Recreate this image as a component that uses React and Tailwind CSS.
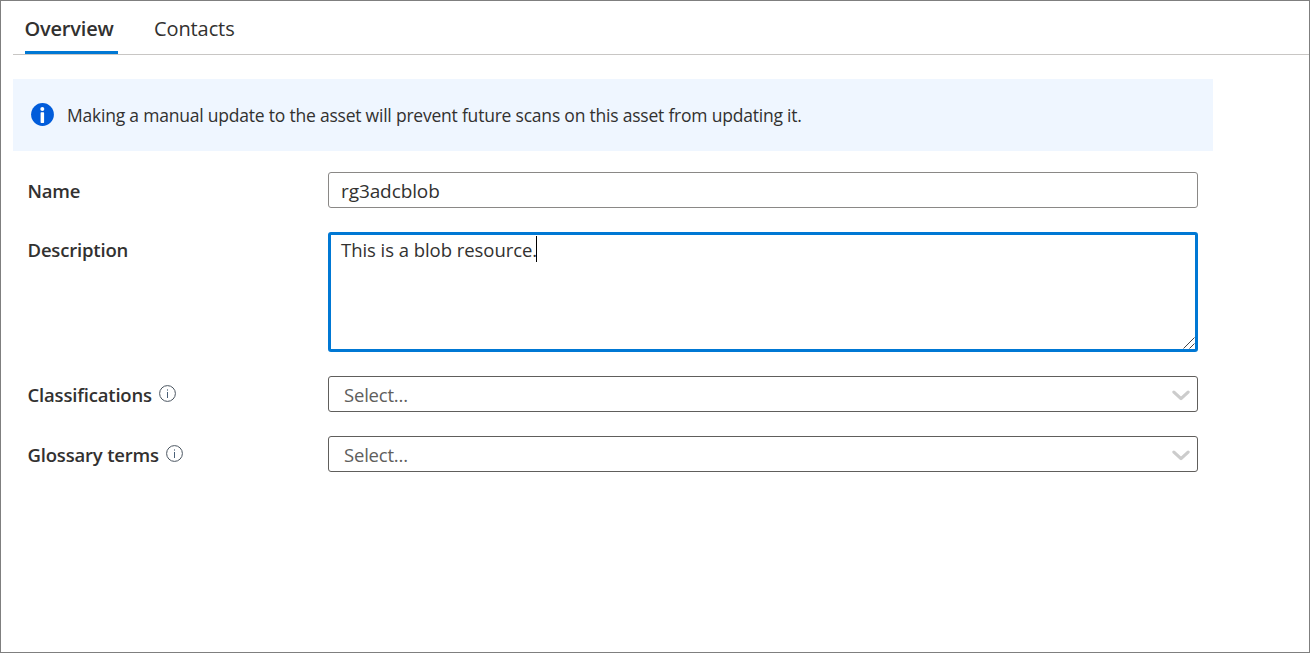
function InfoOutline() {
  return (
    <svg width="17" height="17" viewBox="0 0 17 17" fill="none" className="shrink-0">
      <circle cx="8.5" cy="8.5" r="7.9" stroke="#4a5560" strokeWidth="1" />
      <rect x="8" y="7" width="1" height="6" fill="#4a6078" />
      <rect x="8" y="4.4" width="1" height="1.2" fill="#4a6078" />
    </svg>
  );
}

function InfoSolid() {
  return (
    <svg width="23" height="23" viewBox="0 0 23 23" className="shrink-0">
      <circle cx="11.5" cy="11.5" r="11.4" fill="#015cda" />
      <circle cx="11.3" cy="5.9" r="2" fill="#fff" />
      <rect x="9.6" y="9.3" width="3.5" height="10.6" rx="0.6" fill="#fff" />
    </svg>
  );
}

function Chevron() {
  return (
    <svg width="18" height="11" viewBox="0 0 18 11" fill="none" className="shrink-0">
      <path d="M1.9 2.1 L9 8.6 L16.1 2.1" stroke="#cccccc" strokeWidth="3.2" strokeLinecap="round" strokeLinejoin="round" />
    </svg>
  );
}

function Label({ children, info }) {
  return (
    <div className="flex h-9 w-[300px] shrink-0 items-center gap-[7px] pt-[2px] text-[18.5px] font-semibold">
      <span className="-ml-[0.5px] tracking-[-0.18px]">{children}</span>
      {info && (
        <span className="-mt-1">
          <InfoOutline />
        </span>
      )}
    </div>
  );
}

function Select() {
  return (
    <div className="flex h-9 flex-1 items-center justify-between rounded-[3px] border border-[#605e5c] pt-[2px] pr-[7px] pl-[15px] text-[#605e5c]">
      <span className="tracking-[-0.2px]">Select...</span>
      <Chevron />
    </div>
  );
}

export default function App() {
  return (
    <div className="h-[653px] w-full border border-[#7f7f7f] bg-white pl-3 font-['Open_Sans','Noto_Sans',sans-serif] text-[18.5px] leading-[26px] text-[#323130]">
      <nav className="flex h-[54px] gap-9 border-b border-[#c8c6c4] pl-3 text-[20px]">
        <div className="w-[93px] border-b-[3px] border-[#0078d4] pt-[15px] font-semibold tracking-[-0.2px]">
          <span className="-ml-[0.5px]">Overview</span>
        </div>
        <div className="pt-[15px] tracking-[-0.1px]">Contacts</div>
      </nav>

      <div className="mt-6 flex h-[72px] w-[1200px] items-center gap-[13px] bg-[#eff6ff] pb-px pl-[18px] text-[17.5px]">
        <InfoSolid />
        <span className="pt-px tracking-[-0.215px]">
          Making a manual update to the asset will prevent future scans on this asset from updating it.
        </span>
      </div>

      <form className="mt-[21px] flex w-[1185px] flex-col gap-6 pl-[15px]">
        <div className="flex">
          <Label>Name</Label>
          <div className="flex h-9 flex-1 items-center rounded-[3px] border border-[#8a8886] pt-[2px] pl-3 text-[19px] tracking-[-0.1px]">
            rg3adcblob
          </div>
        </div>

        <div className="flex">
          <div className="-mt-px">
            <Label>Description</Label>
          </div>
          <div className="relative flex h-[120px] flex-1 items-start rounded-[3px] border-[3px] border-[#0078d4] pt-[1px] pl-[10px]">
            <span className="pt-[1px] tracking-[-0.05px]">This is a blob resource.</span>
            <span className="-ml-px h-[26px] w-px bg-black" />
            <svg width="12" height="12" viewBox="0 0 12 12" className="absolute right-0 bottom-0" fill="none">
              <path d="M0.5 11.5 L11.5 0.5 M6.5 11.5 L11.5 6.5" stroke="#444" strokeWidth="1" />
            </svg>
          </div>
        </div>

        <div className="flex">
          <Label info>Classifications</Label>
          <Select />
        </div>

        <div className="flex">
          <Label info>Glossary terms</Label>
          <Select />
        </div>
      </form>
    </div>
  );
}
